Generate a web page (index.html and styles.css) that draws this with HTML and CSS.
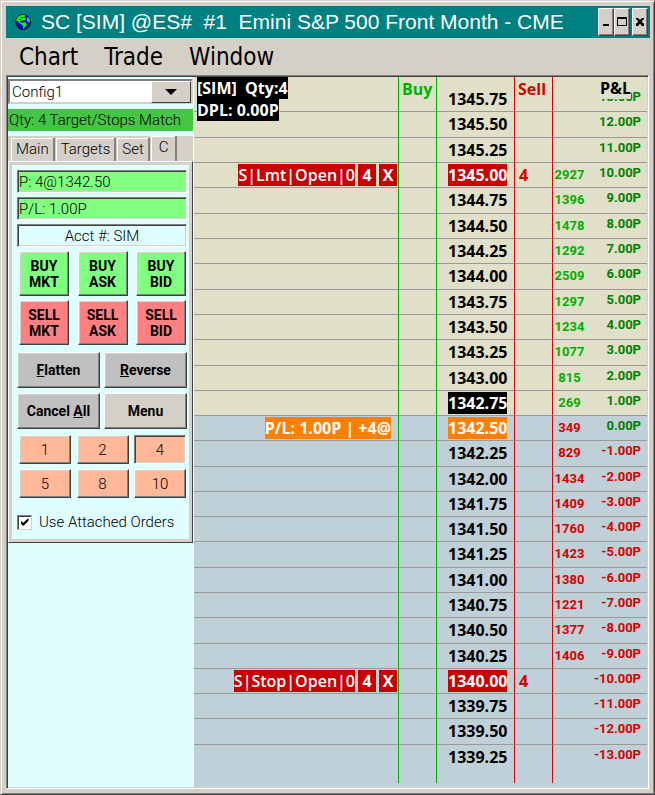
FILE: index.html
```html
<!DOCTYPE html>
<html lang="en">
<head>
<meta charset="utf-8">
<title>SC [SIM] @ES# #1 Emini S&amp;P 500 Front Month - CME</title>
<link rel="stylesheet" href="styles.css">
</head>
<body>
<div class="window">
  <header class="titlebar">
    <svg class="globe" viewBox="0 0 16 16" aria-hidden="true">
      <circle cx="8" cy="8" r="7.400" fill="#0000f8" stroke="#000" stroke-width="1"/>
      <path d="M1 7 L2 4 L4 2 L6 1 L10 1 L11 2 L9 3 L10 4 L11 6 L8 6 L7 7 L5 7 L5 8 L7 9 L9 8 L11 9 L12 11 L10 13 L9 15 L8 15 L8 12 L6 10 L4 9 L3 7Z M12 3 L14 4 L15 7 L14 9 L12 7Z" fill="#00f800"/>
      <path d="M6 3h2v1H6z M4 5h2v1H4z" fill="#0000f8"/>
    </svg>
    <h1 class="title">SC [SIM] @ES#&nbsp; #1&nbsp; Emini S&amp;P 500 Front Month - CME</h1>
    <div class="window-buttons">
      <button class="sysbtn" aria-label="Minimize"><svg viewBox="0 0 12 20"><path d="M3 12h6v2H3z"/></svg></button>
      <button class="sysbtn" aria-label="Maximize"><svg viewBox="0 0 12 20"><path fill-rule="evenodd" d="M1 5h10v9H1z M2 7h8v6H2z"/></svg></button>
      <button class="sysbtn close" aria-label="Close"><svg viewBox="0 0 12 20"><path d="M2 6h2l2 2 2-2h2v1L7.500 9.500 10 12v2H8L6 11.500 4 14H2v-2l2.500-2.500L2 7z"/></svg></button>
    </div>
  </header>
  <nav class="menubar">
    <button class="menu">Chart</button>
    <button class="menu">Trade</button>
    <button class="menu">Window</button>
  </nav>
  <main class="workspace">
    <aside class="sidebar">
      <div class="combo">
        <select aria-label="Configuration"><option>Config1</option></select>
        <span class="combo-arrow" aria-hidden="true"></span>
      </div>
      <p class="status">Qty: 4 Target/Stops Match</p>
      <div class="tabs" role="tablist">
        <button class="tab" role="tab">Main</button>
        <button class="tab" role="tab">Targets</button>
        <button class="tab" role="tab">Set</button>
        <button class="tab active" role="tab" aria-selected="true">C</button>
      </div>
      <section class="panel">
        <div class="fields">
          <input class="field" aria-label="Position" value="P: 4@1342.50" readonly>
          <input class="field" aria-label="Profit and loss" value="P/L: 1.00P" readonly>
          <input class="field account" aria-label="Account" value="Acct #: SIM" readonly>
        </div>
        <div class="trade-grid">
          <button class="btn buy">BUY<br>MKT</button>
          <button class="btn buy">BUY<br>ASK</button>
          <button class="btn buy">BUY<br>BID</button>
          <button class="btn sell">SELL<br>MKT</button>
          <button class="btn sell">SELL<br>ASK</button>
          <button class="btn sell">SELL<br>BID</button>
        </div>
        <div class="action-grid">
          <button class="btn grey"><span><u>F</u>latten</span></button>
          <button class="btn grey"><span><u>R</u>everse</span></button>
          <button class="btn grey"><span>Cancel <u>A</u>ll</span></button>
          <button class="btn">Menu</button>
        </div>
        <div class="qty-grid">
          <button class="btn qty">1</button>
          <button class="btn qty">2</button>
          <button class="btn qty pressed">4</button>
          <button class="btn qty">5</button>
          <button class="btn qty">8</button>
          <button class="btn qty">10</button>
        </div>
        <label class="attach"><input type="checkbox" checked> Use Attached Orders</label>
      </section>
    </aside>
    <section class="chart">
      <div class="summary"><span>[SIM]&nbsp; Qty:4</span><span>DPL: 0.00P</span></div>
      <table class="ladder">
        <colgroup><col><col class="c-side"><col class="c-price"><col class="c-side"><col class="c-vol"><col class="c-pl"></colgroup>
        <thead>
          <tr><th></th><th class="buy-col"><span class="head">Buy</span></th><th class="buy-col"></th><th class="sell-col"><span class="head">Sell</span></th><th class="sell-col"></th><th><span class="head head-pl">P&amp;L</span></th></tr>
        </thead>
        <tbody>
          <tr class="up"><td></td><td></td><td>1345.75</td><td></td><td></td><td>13.00P</td></tr>
          <tr class="up"><td></td><td></td><td>1345.50</td><td></td><td></td><td>12.00P</td></tr>
          <tr class="up"><td></td><td></td><td>1345.25</td><td></td><td></td><td>11.00P</td></tr>
          <tr class="up"><td><div class="order"><span class="tag">S|Lmt|Open|0</span><button class="tag">4</button><button class="tag">X</button></div></td><td></td><td><span class="mark red">1345.00</span></td><td>4</td><td>2927</td><td>10.00P</td></tr>
          <tr class="up"><td></td><td></td><td>1344.75</td><td></td><td>1396</td><td>9.00P</td></tr>
          <tr class="up"><td></td><td></td><td>1344.50</td><td></td><td>1478</td><td>8.00P</td></tr>
          <tr class="up"><td></td><td></td><td>1344.25</td><td></td><td>1292</td><td>7.00P</td></tr>
          <tr class="up"><td></td><td></td><td>1344.00</td><td></td><td>2509</td><td>6.00P</td></tr>
          <tr class="up"><td></td><td></td><td>1343.75</td><td></td><td>1297</td><td>5.00P</td></tr>
          <tr class="up"><td></td><td></td><td>1343.50</td><td></td><td>1234</td><td>4.00P</td></tr>
          <tr class="up"><td></td><td></td><td>1343.25</td><td></td><td>1077</td><td>3.00P</td></tr>
          <tr class="up"><td></td><td></td><td>1343.00</td><td></td><td>815</td><td>2.00P</td></tr>
          <tr class="up"><td></td><td></td><td><span class="mark black">1342.75</span></td><td></td><td>269</td><td>1.00P</td></tr>
          <tr><td><div class="order position"><span class="tag orange">P/L: 1.00P | +4@</span></div></td><td></td><td><span class="mark orange">1342.50</span></td><td></td><td>349</td><td class="even">0.00P</td></tr>
          <tr><td></td><td></td><td>1342.25</td><td></td><td>829</td><td>-1.00P</td></tr>
          <tr><td></td><td></td><td>1342.00</td><td></td><td>1434</td><td>-2.00P</td></tr>
          <tr><td></td><td></td><td>1341.75</td><td></td><td>1409</td><td>-3.00P</td></tr>
          <tr><td></td><td></td><td>1341.50</td><td></td><td>1760</td><td>-4.00P</td></tr>
          <tr><td></td><td></td><td>1341.25</td><td></td><td>1423</td><td>-5.00P</td></tr>
          <tr><td></td><td></td><td>1341.00</td><td></td><td>1380</td><td>-6.00P</td></tr>
          <tr><td></td><td></td><td>1340.75</td><td></td><td>1221</td><td>-7.00P</td></tr>
          <tr><td></td><td></td><td>1340.50</td><td></td><td>1377</td><td>-8.00P</td></tr>
          <tr><td></td><td></td><td>1340.25</td><td></td><td>1406</td><td>-9.00P</td></tr>
          <tr><td><div class="order"><span class="tag">S|Stop|Open|0</span><button class="tag">4</button><button class="tag">X</button></div></td><td></td><td><span class="mark red">1340.00</span></td><td>4</td><td></td><td>-10.00P</td></tr>
          <tr><td></td><td></td><td>1339.75</td><td></td><td></td><td>-11.00P</td></tr>
          <tr><td></td><td></td><td>1339.50</td><td></td><td></td><td>-12.00P</td></tr>
          <tr><td></td><td></td><td>1339.25</td><td></td><td></td><td>-13.00P</td></tr>
        </tbody>
      </table>
    </section>
  </main>
</div>
</body>
</html>
```
FILE: styles.css
```css
:root {
  --face: #d4d0c8;
  --light: #ffffff;
  --shade: #808080;
  --dark: #404040;
  --cyan: #dfffff;
  --tan: #e0e0c8;
  --blue: #c0d0d8;
  --green: #00b000;
  --red: #d80000;
}

* { box-sizing: border-box; }

body {
  margin: 0;
  background: var(--face);
  font: 300 15px/20px Roboto, "Liberation Sans", sans-serif;
  color: #000;
}

button { font: inherit; color: inherit; margin: 0; padding: 0; }

.window {
  min-height: 100vh;
  display: flex;
  flex-direction: column;
  background: var(--face);
  border: 1px solid;
  border-color: var(--face) var(--dark) var(--dark) var(--face);
  padding: 4px;
  box-shadow: inset 1px 1px var(--light), inset -1px -1px var(--shade);
}

/* Title bar and menu */
.titlebar {
  display: flex;
  align-items: center;
  height: 32px;
  margin: 1px 0 0 1px;
  padding: 0 2px 0 9px;
  background: #008080;
}
.globe { width: 16px; height: 16px; flex: none; }
.title {
  flex: 1;
  margin: 0 0 0 10px;
  font: 400 21px/28px "Liberation Sans", Arial, sans-serif;
  color: #fff;
  white-space: nowrap;
}
.window-buttons { display: flex; }
.sysbtn {
  width: 16px;
  height: 28px;
  display: flex;
  align-items: center;
  justify-content: center;
  background: var(--face);
  border: 1px solid;
  border-color: var(--light) var(--dark) var(--dark) var(--light);
  box-shadow: inset -1px -1px var(--shade);
}
.sysbtn svg { width: 12px; height: 20px; flex: none; }
.sysbtn.close { margin-left: 2px; }

.menubar { display: flex; gap: 26px; height: 37px; padding-left: 14px; }
.menu {
  background: none;
  border: 0;
  font: 24px/36px "DejaVu Sans Condensed", "DejaVu Sans", sans-serif;
}

.workspace {
  flex: 1;
  display: flex;
  margin: 0 1px 1px 1px;
  border: 1px solid;
  border-color: var(--shade) var(--light) var(--light) var(--shade);
  box-shadow: inset 1px 1px var(--dark), inset -1px -1px var(--face);
  padding: 1px;
}

/* Trade panel */
.sidebar {
  width: 186px;
  flex: none;
  background: var(--cyan);
  border-right: 1px solid var(--light);
  padding-top: 2px;
}
.combo { position: relative; height: 25px; }
.combo select {
  appearance: none;
  width: 100%;
  height: 25px;
  padding: 0 40px 0 2px;
  font: inherit;
  background: #fff;
  border: 2px solid;
  border-color: var(--shade) var(--face) var(--face) var(--shade);
  border-radius: 0;
  color: #000;
}
.combo-arrow {
  position: absolute;
  top: 2px;
  right: 2px;
  width: 40px;
  height: 22px;
  background: var(--face);
  border: 1px solid;
  border-color: var(--light) var(--dark) var(--dark) var(--light);
  pointer-events: none;
  display: grid;
  place-items: center;
}
.combo-arrow::before {
  content: "";
  border: 6px solid transparent;
  border-top-color: #000;
  border-bottom: 0;
}
.status {
  margin: 5px 0;
  height: 22px;
  padding-left: 1px;
  line-height: 22px;
  background: #44c544;
  white-space: nowrap;
}
.tabs {
  display: flex;
  align-items: flex-end;
  height: 25px;
  padding-left: 3px;
  background: var(--face);
}
.tab {
  height: 23px;
  padding: 0 4px;
  line-height: 21px;
  background: var(--face);
  border: 0;
  border-left: 1px solid var(--light);
  border-right: 2px solid var(--shade);
  box-shadow: inset 0 1px var(--light);
  margin-right: 1px;
}
.tab.active { height: 25px; padding: 0 7px 2px 7px; }
.panel {
  border: 1px solid;
  border-color: var(--light) var(--dark) var(--dark) var(--light);
  outline: 3px solid var(--face);
  outline-offset: -4px;
  padding: 8px 5px 10px 8px;
  box-shadow: inset -1px -1px var(--shade);
}
.fields { display: grid; gap: 4px; }
.field {
  width: 100%;
  height: 23px;
  padding: 0 1px;
  font: inherit;
  color: #000;
  background: #80ff80;
  border: 1px solid;
  border-color: var(--shade) var(--light) var(--light) var(--shade);
  box-shadow: inset 1px 1px var(--dark), inset -1px -1px var(--face);
}
.field.account { background: var(--cyan); text-align: center; }

.btn {
  background: var(--face);
  border: 1px solid;
  border-color: var(--light) var(--dark) var(--dark) var(--light);
  box-shadow: inset -1px -1px var(--shade), inset 1px 1px var(--face);
  font: 700 14px/16px Roboto, "Liberation Sans", sans-serif;
}
.buy { background: #80ff80; }
.sell { background: #ff8080; }
.grey { background: #c0c0c0; }
.trade-grid {
  display: grid;
  grid-template-columns: repeat(3, 50px);
  grid-auto-rows: 45px;
  justify-content: space-between;
  gap: 4px;
  margin: 4px 1px 0 2px;
}
.action-grid {
  display: grid;
  grid-template-columns: 1fr 1fr;
  grid-auto-rows: 36px;
  gap: 5px 4px;
  margin-top: 7px;
}
.qty-grid {
  display: grid;
  grid-template-columns: repeat(3, 52px);
  grid-auto-rows: 29px;
  justify-content: space-between;
  gap: 5px;
  margin: 6px 1px 0 2px;
}
.qty { background: #ffb898; font-size: 15px; font-weight: 300; }
.pressed {
  border-color: var(--shade) var(--light) var(--light) var(--shade);
  box-shadow: inset 1px 1px var(--dark), inset -1px -1px var(--face);
}
.attach { display: flex; align-items: center; gap: 7px; margin-top: 14px; white-space: nowrap; }
.attach input {
  appearance: none;
  width: 15px;
  height: 15px;
  margin: 0;
  flex: none;
  background: #fff;
  border: 1px solid;
  border-color: var(--shade) var(--face) var(--face) var(--shade);
  box-shadow: inset 1px 1px var(--dark);
  display: grid;
  place-items: center;
}
.attach input:checked::before {
  content: "";
  width: 8px;
  height: 8px;
  background: #000;
  clip-path: polygon(0 30%, 35% 60%, 100% 0, 100% 35%, 35% 100%, 0 65%);
}

/* Price ladder */
.chart {
  position: relative;
  flex: 1;
  min-width: 0;
  background: var(--blue);
  font: 700 16px/22px "Open Sans", "Noto Sans", sans-serif;
}
.summary {
  position: absolute;
  top: 0;
  left: 3px;
  display: flex;
  flex-direction: column;
  align-items: flex-start;
  color: #fff;
}
.summary span { background: #000; }
.ladder { width: 100%; table-layout: fixed; border-collapse: separate; border-spacing: 0; }
.c-side { width: 38px; }
.c-price { width: 78px; }
.c-vol { width: 38px; }
.c-pl { width: 57px; }

th { height: 10px; padding: 0; background: var(--tan); line-height: 0; text-align: left; }
.head {
  position: absolute;
  top: 0;
  padding: 1px 0 0 3px;
  line-height: 22px;
  font-weight: 700;
}
.head-pl { right: 16px; padding: 0; background: var(--tan); }
.buy-col { color: var(--green); }
.sell-col { color: var(--red); }

td { height: 25px; padding: 1px 0 0; vertical-align: top; border-bottom: 1px solid #999; }
tbody tr:nth-child(-3n+11) td,
tbody tr:nth-child(15) td,
tbody tr:nth-child(19) td,
tbody tr:nth-child(22) td,
tbody tr:nth-child(26) td { height: 26px; }
tbody tr:last-child td { height: 38px; border-bottom: 0; }
.up td { background: var(--tan); }

th.buy-col, td:nth-child(2), td:nth-child(3) { border-left: 1px solid var(--green); }
th.sell-col, td:nth-child(4), td:nth-child(5) { border-left: 1px solid var(--red); }

td:nth-child(3) { padding-left: 11px; }
td:nth-child(4) { padding-left: 4px; color: var(--red); }
td:nth-child(5), td:nth-child(6) { font: 700 13px/22px Roboto, "Liberation Sans", sans-serif; color: var(--red); }
td:nth-child(5) { text-align: center; padding-right: 4px; }
td:nth-child(6) { padding: 0 6px 0 0; line-height: 20px; text-align: right; }
.up td:nth-child(5) { color: var(--green); }
.up td:nth-child(6), td.even:nth-child(6) { color: #008000; }

.mark { display: inline-block; color: #fff; }
.red { background: #c80000; }
.black { background: #000; }
.orange { background: #ff8000; }
.order { display: flex; justify-content: flex-end; gap: 3px; padding-right: 1px; color: #fff; white-space: nowrap; font-weight: 600; }
.position { padding-right: 7px; font-weight: 700; }
.tag { background: #c80000; border: 0; line-height: 22px; }
button.tag { width: 18px; font-weight: 700; }
.tag.orange { background: #ff8000; }
```
